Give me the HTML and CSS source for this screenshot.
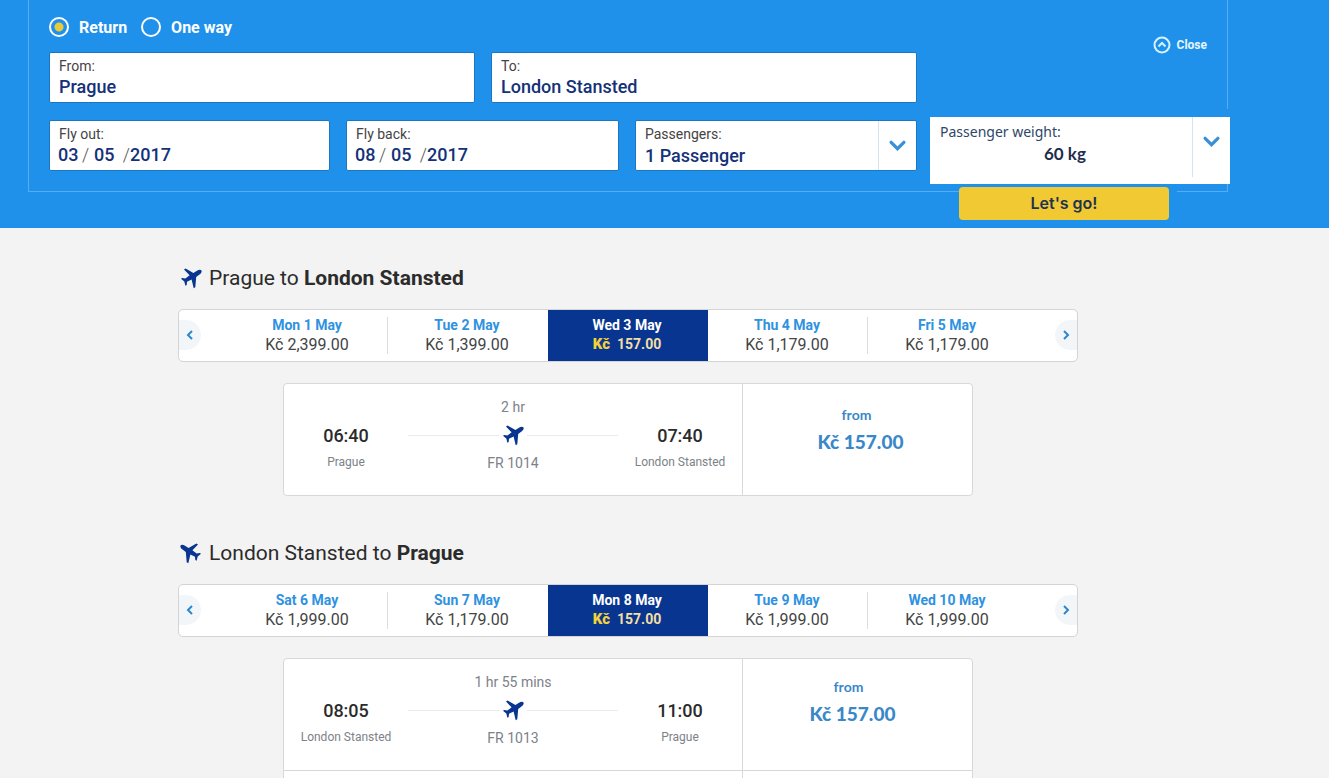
FILE: index.html
```
<!DOCTYPE html>
<html lang="en">
<head>
    <meta charset="UTF-8">
    <meta name="viewport" content="width=device-width, initial-scale=1.0">
    <title>Flights</title>
    <link rel="stylesheet" href="styles.css">
</head>
<body>
    <svg class="sprite" aria-hidden="true">
        <symbol id="plane" viewBox="0 0 22 22">
            <path d="M21.5 3.4C20.7 2.4 18.8 2.6 17 3.7L13.4 5.9 5.6 1.6 4 2.6 9.6 8.3 5.4 11.6 2.2 10.9 1 11.8 4.3 14.5 5.4 18.8 6.7 18 7 14.7 11.6 12.5 13.7 21.2 15.3 20.3 16.2 10.1 19.8 7.3C21.4 6 22 4.4 21.5 3.4Z"/>
        </symbol>
        <symbol id="down" viewBox="0 0 16 10">
            <path d="M2 2l6 6 6-6"/>
        </symbol>
    </svg>

    <header class="search">
        <form class="panel">
            <div class="trip">
                <div class="trip-type">
                    <label><input type="radio" name="type" checked>Return</label>
                    <label><input type="radio" name="type">One way</label>
                </div>
                <div class="row route">
                    <div class="field">
                        <label for="from">From:</label>
                        <input type="text" id="from" value="Prague">
                    </div>
                    <div class="field">
                        <label for="to">To:</label>
                        <input type="text" id="to" value="London Stansted">
                    </div>
                </div>
                <div class="row details">
                    <div class="field">
                        <label for="out-day">Fly out:</label>
                        <div class="date">
                            <input type="text" id="out-day" value="03"><span>/</span>
                            <input type="text" aria-label="Month" value="05"><span>/</span>
                            <input type="text" class="year" aria-label="Year" value="2017">
                        </div>
                    </div>
                    <div class="field">
                        <label for="back-day">Fly back:</label>
                        <div class="date">
                            <input type="text" id="back-day" value="08"><span>/</span>
                            <input type="text" aria-label="Month" value="05"><span>/</span>
                            <input type="text" class="year" aria-label="Year" value="2017">
                        </div>
                    </div>
                    <div class="field select">
                        <label for="passengers">Passengers:</label>
                        <select id="passengers"><option>1 Passenger</option></select>
                        <svg class="arrow"><use href="#down"/></svg>
                    </div>
                </div>
            </div>
            <div class="side">
                <button type="button" class="close">
                    <svg viewBox="0 0 18 18"><circle cx="9" cy="9" r="7.5"/><path d="M5.5 10.5L9 7l3.5 3.5"/></svg>Close
                </button>
                <div class="field select weight">
                    <label for="weight">Passenger weight:</label>
                    <select id="weight"><option>60 kg</option></select>
                    <svg class="arrow"><use href="#down"/></svg>
                </div>
                <button type="submit" class="go">Let's go!</button>
            </div>
        </form>
    </header>

    <main class="results">
        <section class="flight">
            <h2><svg class="plane"><use href="#plane"/></svg>Prague to <b>London Stansted</b></h2>
            <div class="days">
                <button class="nav prev" aria-label="Previous days"><svg viewBox="0 0 8 12"><path d="M6 2L2 6l4 4"/></svg></button>
                <button class="day"><b>Mon 1 May</b>Kč 2,399.00</button>
                <button class="day line"><b>Tue 2 May</b>Kč 1,399.00</button>
                <button class="day active"><b>Wed 3 May</b><span class="cost"><i>Kč</i>157.00</span></button>
                <button class="day"><b>Thu 4 May</b>Kč 1,179.00</button>
                <button class="day line"><b>Fri 5 May</b>Kč 1,179.00</button>
                <button class="nav next" aria-label="Next days"><svg viewBox="0 0 8 12"><path d="M2 2l4 4-4 4"/></svg></button>
            </div>
            <div class="card">
                <div class="times">
                    <div class="stop"><strong>06:40</strong><span>Prague</span></div>
                    <div class="leg">
                        <span>2 hr</span>
                        <div class="track"><svg class="plane"><use href="#plane"/></svg></div>
                        <span>FR 1014</span>
                    </div>
                    <div class="stop"><strong>07:40</strong><span>London Stansted</span></div>
                </div>
                <div class="price"><span>from</span><strong>Kč 157.00</strong></div>
            </div>
        </section>

        <section class="flight back">
            <h2><svg class="plane"><use href="#plane"/></svg>London Stansted to <b>Prague</b></h2>
            <div class="days">
                <button class="nav prev" aria-label="Previous days"><svg viewBox="0 0 8 12"><path d="M6 2L2 6l4 4"/></svg></button>
                <button class="day"><b>Sat 6 May</b>Kč 1,999.00</button>
                <button class="day line"><b>Sun 7 May</b>Kč 1,179.00</button>
                <button class="day active"><b>Mon 8 May</b><span class="cost"><i>Kč</i>157.00</span></button>
                <button class="day"><b>Tue 9 May</b>Kč 1,999.00</button>
                <button class="day line"><b>Wed 10 May</b>Kč 1,999.00</button>
                <button class="nav next" aria-label="Next days"><svg viewBox="0 0 8 12"><path d="M2 2l4 4-4 4"/></svg></button>
            </div>
            <div class="card open">
                <div class="times">
                    <div class="stop"><strong>08:05</strong><span>London Stansted</span></div>
                    <div class="leg">
                        <span>1 hr 55 mins</span>
                        <div class="track"><svg class="plane"><use href="#plane"/></svg></div>
                        <span>FR 1013</span>
                    </div>
                    <div class="stop"><strong>11:00</strong><span>Prague</span></div>
                </div>
                <div class="price"><span>from</span><strong>Kč 157.00</strong></div>
            </div>
            <div class="card-more"></div>
        </section>
    </main>
</body>
</html>
```
FILE: styles.css
```
* {
    box-sizing: border-box;
}
body {
    font-family: Roboto, Arial, sans-serif;
    background-color: #f3f3f3;
    color: #2b2b2b;
    margin: 0;
}
button, input, select {
    font: inherit;
    color: inherit;
    background: none;
    border: 0;
    padding: 0;
    margin: 0;
}
button {
    cursor: pointer;
}
.sprite {
    display: none;
}

/* search panel */
.search {
    background-color: #2091eb;
    padding: 0 28px 36px;
}
.panel {
    display: flex;
    gap: 13px;
    max-width: 1200px;
    padding: 17px 0 20px 20px;
    border: 1px solid #55aef5;
    border-top: 0;
}
.trip {
    flex: 1;
}
.trip-type {
    display: flex;
    gap: 14px;
    height: 20px;
    margin-bottom: 15px;
    color: #fff;
    font-size: 16px;
    font-weight: 700;
}
.trip-type label {
    display: flex;
    align-items: center;
    gap: 10px;
}
.trip-type input {
    appearance: none;
    width: 20px;
    height: 20px;
    border: 2px solid #fff;
    border-radius: 50%;
}
.trip-type input:checked {
    background: radial-gradient(circle, #e8ca3c 4px, transparent 5px);
}
.row {
    display: grid;
    gap: 16px;
}
.route {
    grid-template-columns: 1fr 1fr;
    margin-bottom: 17px;
}
.details {
    grid-template-columns: 281fr 273fr 282fr;
}
.field {
    position: relative;
    height: 51px;
    padding: 4px 9px 0;
    background-color: #fff;
    border: 1px solid #1c77c2;
    border-radius: 2px;
}
.field label {
    display: block;
    font-size: 14px;
    line-height: 18px;
    color: #444;
}
.field input, .field select {
    display: block;
    width: 100%;
    height: 22px;
    font-size: 18px;
    font-weight: 500;
    color: #143278;
}
.date {
    display: flex;
    margin-left: -1px;
    font-size: 18px;
    line-height: 22px;
    color: #555;
}
.date input {
    width: 24px;
}
.date span {
    width: 12px;
    font-weight: 300;
}
.date span:last-of-type {
    text-align: right;
}
.date .year {
    width: 48px;
}
.field select {
    appearance: none;
}
.details .date, .details select {
    margin-top: 1px;
}
.arrow {
    position: absolute;
    top: 0;
    right: 0;
    width: 38px;
    height: 100%;
    padding: 19px 10px;
    border-left: 1px solid #d5e3ef;
    fill: none;
    stroke: #3a8fd6;
    stroke-width: 3;
    stroke-linecap: round;
    pointer-events: none;
}
.side {
    display: flex;
    flex-direction: column;
    width: 300px;
    margin: 0 -3px -49px 0;
}
.close {
    display: flex;
    align-items: center;
    align-self: flex-end;
    gap: 6px;
    height: 18px;
    margin: 19px 23px 63px 0;
    font-size: 12px;
    font-weight: 700;
    color: #e6f6ff;
}
.close svg {
    width: 18px;
    height: 18px;
    fill: none;
    stroke: #d5f3ff;
    stroke-width: 2;
}
.weight {
    height: 67px;
    padding: 6px 10px;
    border: 0;
    border-radius: 0;
    box-shadow: 0 -8px #2091eb;
}
.weight label {
    font-family: "Noto Sans", sans-serif;
    color: #2f4668;
}
.weight select {
    height: 24px;
    padding-left: 104px;
    font-family: Lato, sans-serif;
    font-size: 17px;
    font-weight: 700;
    color: #1f2c4c;
}
.weight .arrow {
    height: 60px;
    padding-bottom: 30px;
}
.go {
    align-self: center;
    width: 210px;
    height: 33px;
    margin: 3px 32px 0 0;
    padding-bottom: 2px;
    background-color: #f1c933;
    border-radius: 4px;
    box-shadow: 8px 0 #2091eb;
    font-family: Inter, sans-serif;
    font-size: 16px;
    font-weight: 600;
    color: #1f3350;
}

/* results */
.results {
    max-width: 1256px;
    padding: 0 28px;
}
.flight {
    max-width: 900px;
    margin: 0 auto;
    padding-top: 35px;
}
.flight + .flight {
    padding-top: 42px;
}
.flight h2 {
    display: flex;
    align-items: center;
    height: 30px;
    margin: 0 0 16px;
    font-size: 21px;
    font-weight: 400;
    white-space: pre;
}
.plane {
    width: 22px;
    height: 22px;
    fill: #073590;
}
.flight h2 .plane {
    margin: 0 7px 0 2px;
}
.back h2 .plane {
    transform: scaleX(-1);
}
.days {
    display: flex;
    justify-content: space-between;
    height: 53px;
    background-color: #fff;
    border: 1px solid #d4d4d4;
    border-radius: 5px;
}
.nav {
    width: 22px;
    height: 30px;
    margin-top: 10px;
    background-color: #f3f6f9;
}
.nav svg {
    display: block;
    width: 8px;
    height: 12px;
    margin: 0 auto;
    fill: none;
    stroke: #2b86d0;
    stroke-width: 2;
}
.prev {
    margin-right: 27px;
    border-radius: 0 15px 15px 0;
}
.next {
    margin-left: 27px;
    border-radius: 15px 0 0 15px;
}
.day {
    position: relative;
    flex: 1;
    padding: 0 2px 2px 0;
    font-size: 16px;
    line-height: 19px;
    color: #444;
}
.day b {
    display: block;
    font-size: 14px;
    color: #2f92e0;
}
.line::before {
    content: "";
    position: absolute;
    top: 7px;
    bottom: 7px;
    left: -1px;
    border-left: 1px solid #ddd;
}
.active {
    background-color: #073590;
}
.day.active b {
    color: #fff;
}
.cost {
    display: flex;
    justify-content: center;
    gap: 7px;
    font-size: 14px;
    font-weight: 700;
    color: #f3dfa4;
}
.cost i {
    font-size: 15px;
    font-style: normal;
    font-weight: 900;
    color: #f1d13c;
}
.card {
    display: grid;
    grid-template-columns: 458fr 230fr;
    max-width: 690px;
    margin: 21px auto 0;
    background-color: #fff;
    border: 1px solid #d8d8d8;
    border-radius: 4px;
}
.times {
    display: grid;
    grid-template-columns: 1fr 210px 1fr;
    height: 111px;
    text-align: center;
    color: #7c8288;
}
.stop {
    padding-top: 40px;
    font-size: 12px;
}
.stop strong {
    display: block;
    margin-bottom: 6px;
    font-size: 18px;
    font-weight: 500;
    line-height: 24px;
    color: #2b2b2b;
}
.stop span {
    display: block;
    line-height: 16px;
}
.leg {
    padding-top: 14px;
    font-size: 14px;
    line-height: 18px;
}
.leg > span {
    display: block;
}
.track {
    display: flex;
    align-items: center;
    gap: 3px;
    height: 38px;
}
.track::before, .track::after {
    content: "";
    flex: 1;
    border-top: 1px solid #e9ecef;
}
.price {
    padding: 21px 2px 0 0;
    border-left: 1px solid #d8d8d8;
    text-align: center;
    font-family: Lato, sans-serif;
    font-size: 14px;
    font-weight: 700;
    line-height: 20px;
    color: #3a88c8;
}
.price span, .price strong {
    display: block;
}
.price strong {
    margin-top: 3px;
    padding-left: 8px;
    font-size: 19px;
    line-height: 28px;
}
.open {
    border-radius: 4px 4px 0 0;
}
.open .price {
    padding: 18px 18px 0 0;
}
.card-more {
    max-width: 690px;
    height: 7px;
    margin: 0 auto;
    background: #fff linear-gradient(#d8d8d8, #d8d8d8) 458px 0 / 1px 100% no-repeat;
    border: solid #d8d8d8;
    border-width: 0 1px;
}
```
